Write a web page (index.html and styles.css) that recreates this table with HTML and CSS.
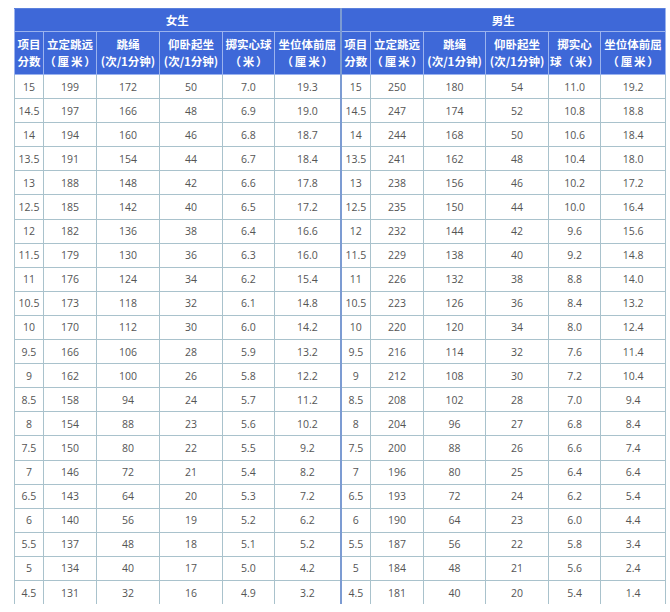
FILE: index.html
```html
<!DOCTYPE html>
<html lang="zh">
<head>
<meta charset="utf-8">
<title>体育成绩评分标准</title>
<link rel="stylesheet" href="styles.css">
</head>
<body>
<table class="score">
<colgroup>
<col class="c1"><col class="c2"><col class="c3"><col class="c4"><col class="c5"><col class="c6">
<col class="d1"><col class="d2"><col class="d3"><col class="d4"><col class="d5"><col class="d6">
</colgroup>
<thead>
<tr class="h1"><th colspan="6" class="split">女生</th><th colspan="6">男生</th></tr>
<tr class="h2">
<th>项目<br>分数</th><th>立定跳远<br><span class="unit">（厘米）</span></th><th>跳绳<br>(次/1分钟)</th><th>仰卧起坐<br>(次/1分钟)</th><th>掷实心球<br><span class="unit">（米）</span></th><th class="split">坐位体前屈<br><span class="unit">（厘米）</span></th>
<th>项目<br>分数</th><th>立定跳远<br><span class="unit">（厘米）</span></th><th>跳绳<br>(次/1分钟)</th><th>仰卧起坐<br>(次/1分钟)</th><th>掷实心<br><span class="unit tight">球（米）</span></th><th>坐位体前屈<br><span class="unit">（厘米）</span></th>
</tr>
</thead>
<tbody>
<tr><td>15</td><td>199</td><td>172</td><td>50</td><td>7.0</td><td class="split">19.3</td><td>15</td><td>250</td><td>180</td><td>54</td><td>11.0</td><td>19.2</td></tr>
<tr><td>14.5</td><td>197</td><td>166</td><td>48</td><td>6.9</td><td class="split">19.0</td><td>14.5</td><td>247</td><td>174</td><td>52</td><td>10.8</td><td>18.8</td></tr>
<tr><td>14</td><td>194</td><td>160</td><td>46</td><td>6.8</td><td class="split">18.7</td><td>14</td><td>244</td><td>168</td><td>50</td><td>10.6</td><td>18.4</td></tr>
<tr><td>13.5</td><td>191</td><td>154</td><td>44</td><td>6.7</td><td class="split">18.4</td><td>13.5</td><td>241</td><td>162</td><td>48</td><td>10.4</td><td>18.0</td></tr>
<tr><td>13</td><td>188</td><td>148</td><td>42</td><td>6.6</td><td class="split">17.8</td><td>13</td><td>238</td><td>156</td><td>46</td><td>10.2</td><td>17.2</td></tr>
<tr><td>12.5</td><td>185</td><td>142</td><td>40</td><td>6.5</td><td class="split">17.2</td><td>12.5</td><td>235</td><td>150</td><td>44</td><td>10.0</td><td>16.4</td></tr>
<tr><td>12</td><td>182</td><td>136</td><td>38</td><td>6.4</td><td class="split">16.6</td><td>12</td><td>232</td><td>144</td><td>42</td><td>9.6</td><td>15.6</td></tr>
<tr><td>11.5</td><td>179</td><td>130</td><td>36</td><td>6.3</td><td class="split">16.0</td><td>11.5</td><td>229</td><td>138</td><td>40</td><td>9.2</td><td>14.8</td></tr>
<tr><td>11</td><td>176</td><td>124</td><td>34</td><td>6.2</td><td class="split">15.4</td><td>11</td><td>226</td><td>132</td><td>38</td><td>8.8</td><td>14.0</td></tr>
<tr><td>10.5</td><td>173</td><td>118</td><td>32</td><td>6.1</td><td class="split">14.8</td><td>10.5</td><td>223</td><td>126</td><td>36</td><td>8.4</td><td>13.2</td></tr>
<tr><td>10</td><td>170</td><td>112</td><td>30</td><td>6.0</td><td class="split">14.2</td><td>10</td><td>220</td><td>120</td><td>34</td><td>8.0</td><td>12.4</td></tr>
<tr><td>9.5</td><td>166</td><td>106</td><td>28</td><td>5.9</td><td class="split">13.2</td><td>9.5</td><td>216</td><td>114</td><td>32</td><td>7.6</td><td>11.4</td></tr>
<tr><td>9</td><td>162</td><td>100</td><td>26</td><td>5.8</td><td class="split">12.2</td><td>9</td><td>212</td><td>108</td><td>30</td><td>7.2</td><td>10.4</td></tr>
<tr><td>8.5</td><td>158</td><td>94</td><td>24</td><td>5.7</td><td class="split">11.2</td><td>8.5</td><td>208</td><td>102</td><td>28</td><td>7.0</td><td>9.4</td></tr>
<tr><td>8</td><td>154</td><td>88</td><td>23</td><td>5.6</td><td class="split">10.2</td><td>8</td><td>204</td><td>96</td><td>27</td><td>6.8</td><td>8.4</td></tr>
<tr><td>7.5</td><td>150</td><td>80</td><td>22</td><td>5.5</td><td class="split">9.2</td><td>7.5</td><td>200</td><td>88</td><td>26</td><td>6.6</td><td>7.4</td></tr>
<tr><td>7</td><td>146</td><td>72</td><td>21</td><td>5.4</td><td class="split">8.2</td><td>7</td><td>196</td><td>80</td><td>25</td><td>6.4</td><td>6.4</td></tr>
<tr><td>6.5</td><td>143</td><td>64</td><td>20</td><td>5.3</td><td class="split">7.2</td><td>6.5</td><td>193</td><td>72</td><td>24</td><td>6.2</td><td>5.4</td></tr>
<tr><td>6</td><td>140</td><td>56</td><td>19</td><td>5.2</td><td class="split">6.2</td><td>6</td><td>190</td><td>64</td><td>23</td><td>6.0</td><td>4.4</td></tr>
<tr><td>5.5</td><td>137</td><td>48</td><td>18</td><td>5.1</td><td class="split">5.2</td><td>5.5</td><td>187</td><td>56</td><td>22</td><td>5.8</td><td>3.4</td></tr>
<tr><td>5</td><td>134</td><td>40</td><td>17</td><td>5.0</td><td class="split">4.2</td><td>5</td><td>184</td><td>48</td><td>21</td><td>5.6</td><td>2.4</td></tr>
<tr class="last"><td>4.5</td><td>131</td><td>32</td><td>16</td><td>4.9</td><td class="split">3.2</td><td>4.5</td><td>181</td><td>40</td><td>20</td><td>5.4</td><td>1.4</td></tr>
</tbody>
</table>
</body>
</html>
```
FILE: styles.css
```css
html, body {
  margin: 0;
  padding: 0;
  background: #ffffff;
}

body {
  padding: 8px 0 0 14px;
  font-family: "Open Sans", "Noto Sans CJK SC", sans-serif;
}

.score {
  table-layout: fixed;
  width: 651px;
  border-collapse: collapse;
  border-left: 1px solid #7f9fc9;
  border-right: 1px solid #7f9fc9;
}

.c1 { width: 29px; }
.c2 { width: 53px; }
.c3 { width: 63px; }
.c4 { width: 63px; }
.c5 { width: 52px; }
.c6 { width: 66px; }
.d1 { width: 30px; }
.d2 { width: 53px; }
.d3 { width: 62px; }
.d4 { width: 63px; }
.d5 { width: 52px; }
.d6 { width: 65px; }

.score th {
  background: #3e68d8;
  color: #ffffff;
  font-family: "Noto Sans CJK SC", sans-serif;
  font-weight: 700;
  font-size: 11.5px;
  line-height: 17px;
  padding: 0;
  border: 1px solid #9bb3ee;
  text-align: center;
  white-space: nowrap;
}

.score th .unit {
  letter-spacing: 1.8px;
  margin-right: -1.8px;
}

.score th .unit.tight {
  letter-spacing: 1px;
  margin-right: -1px;
}

.score .h1 th {
  height: 22px;
  border-top: 1px solid #5a80dc;
}

.score .h2 th {
  height: 42px;
}

.score td {
  height: 23.1px;
  padding: 0;
  border: 1px solid #a9c2cc;
  text-align: center;
  font-size: 10.5px;
  color: #555555;
}

.score .last td {
  border-bottom: none;
}

.score td.split,
.score th.split {
  border-right: 2px solid #7c9bd2;
}
```
